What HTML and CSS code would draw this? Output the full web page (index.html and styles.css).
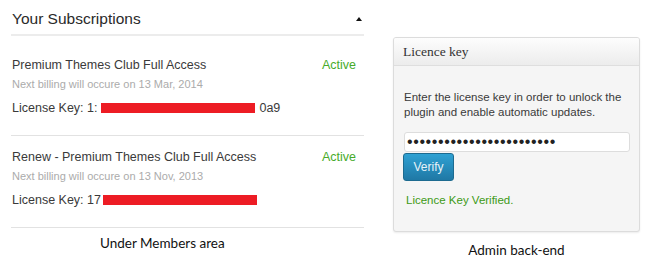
FILE: index.html
```html
<!DOCTYPE html>
<html>
<head>
<meta charset="utf-8">
<link rel="stylesheet" href="styles.css">
</head>
<body>
<div class="page">
  <section class="members">
    <div class="subs-head">
      <h2 class="subs-title">Your Subscriptions</h2>
      <span class="caret"></span>
    </div>
    <div class="subs-list">
      <div class="sub-item">
        <div class="sub-row">
          <span class="sub-name">Premium Themes Club Full Access</span>
          <span class="sub-status">Active</span>
        </div>
        <div class="sub-billing">Next billing will occure on 13 Mar, 2014</div>
        <div class="sub-key">License Key: 1:<span class="redact"></span>0a9</div>
      </div>
      <div class="sub-item">
        <div class="sub-row">
          <span class="sub-name">Renew - Premium Themes Club Full Access</span>
          <span class="sub-status">Active</span>
        </div>
        <div class="sub-billing">Next billing will occure on 13 Nov, 2013</div>
        <div class="sub-key">License Key: 17<span class="redact redact-b"></span></div>
      </div>
    </div>
    <div class="caption caption-members">Under Members area</div>
  </section>
  <section class="admin">
    <div class="box">
      <div class="box-head">Licence key</div>
      <div class="box-body">
        <p class="box-text">Enter the license key in order to unlock the plugin and enable automatic updates.</p>
        <input class="key-input" type="password" value="abcdefghijklmnopqrstuvwx" readonly>
        <button class="verify" type="button">Verify</button>
        <div class="verified">Licence Key Verified.</div>
      </div>
    </div>
    <div class="caption caption-admin">Admin back-end</div>
  </section>
</div>
</body>
</html>
```

FILE: styles.css
```css
html, body {
  margin: 0;
  padding: 0;
  background: #ffffff;
}
.page {
  display: flex;
  align-items: flex-start;
  padding-left: 11px;
  font-family: "Liberation Sans", Arial, sans-serif;
}
.members {
  width: 353px;
  display: flex;
  flex-direction: column;
}
.subs-head {
  display: flex;
  align-items: center;
  justify-content: space-between;
  padding-top: 9px;
  padding-bottom: 5px;
  border-bottom: 2px solid #ececec;
}
.subs-title {
  margin: 0;
  padding-left: 1px;
  font-weight: normal;
  font-size: 15.5px;
  line-height: 20px;
  color: #2a2a2a;
}
.caret {
  width: 0;
  height: 0;
  border-left: 3.5px solid transparent;
  border-right: 3.5px solid transparent;
  border-bottom: 4px solid #111;
  margin-right: 2px;
  margin-bottom: 1px;
}
.subs-list {
  padding-top: 8px;
  display: flex;
  flex-direction: column;
}
.sub-item {
  padding: 13px 0 19px 1px;
  border-bottom: 1px solid #e2e2e2;
}
.sub-row {
  display: flex;
  justify-content: space-between;
  padding-right: 8px;
  font-size: 12.5px;
  line-height: 16px;
}
.sub-name {
  color: #3a3a3a;
}
.sub-status {
  color: #47ab2a;
}
.sub-billing {
  margin-top: 4px;
  font-size: 11px;
  line-height: 14px;
  color: #ababab;
}
.sub-key {
  margin-top: 9px;
  font-size: 12.5px;
  line-height: 16px;
  color: #3a3a3a;
  display: flex;
  align-items: center;
}
.redact {
  display: inline-block;
  width: 154px;
  height: 10px;
  background: #ed1c24;
  margin: 0 4px 0 4px;
}
.redact-b {
  margin-left: 2px;
}
.caption {
  font-family: Lato, "Open Sans", sans-serif;
  font-size: 13.5px;
  line-height: 18px;
  color: #111;
}
.caption-members {
  margin-top: 6px;
  padding-left: 89px;
}
.admin {
  margin-left: 29px;
  margin-top: 37px;
  width: 247px;
  display: flex;
  flex-direction: column;
}
.box {
  border: 1px solid #dcdcdc;
  border-radius: 3px;
  background: #f5f5f5;
  box-shadow: 0 1px 2px rgba(0, 0, 0, 0.08);
  overflow: hidden;
}
.box-head {
  height: 27px;
  line-height: 27px;
  padding-left: 9px;
  font-family: "Liberation Serif", "Times New Roman", serif;
  font-size: 13.5px;
  color: #333;
  background: linear-gradient(#fdfdfd, #ececec);
  border-bottom: 1px solid #dedede;
}
.box-body {
  padding: 24px 10px 24px 10px;
  display: flex;
  flex-direction: column;
  align-items: flex-start;
}
.box-text {
  margin: 0;
  font-size: 11.5px;
  line-height: 15px;
  color: #3a3a3a;
}
.key-input {
  box-sizing: border-box;
  margin: 12px 0 0 0;
  width: 226px;
  height: 20px;
  padding: 0 0 0 2px;
  border: 1px solid #dddddd;
  border-radius: 3px;
  background: #ffffff;
  font-family: "Liberation Sans", Arial, sans-serif;
  font-size: 16px;
  letter-spacing: 0.6px;
  color: #222;
  outline: none;
}
.verify {
  box-sizing: border-box;
  margin: 1px 0 0 -1px;
  width: 51px;
  height: 28px;
  padding: 0;
  border: 1px solid #1d6b90;
  border-radius: 3px;
  background: linear-gradient(#2fa1d3, #1f78a5);
  color: #e6f3f9;
  font-family: "Liberation Sans", Arial, sans-serif;
  font-size: 12px;
}
.verified {
  margin-top: 12px;
  margin-left: 2px;
  font-size: 11.5px;
  line-height: 14px;
  color: #3d9a16;
}
.caption-admin {
  margin-top: 9px;
  text-align: center;
}
```
